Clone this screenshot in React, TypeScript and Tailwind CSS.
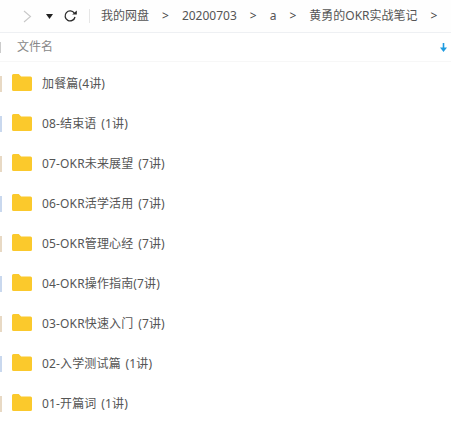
const folders = [
  { name: "加餐篇(4讲)", edge: "bg-[#e8d9c4]" },
  { name: "08-结束语 (1讲)", edge: "bg-[#c9d8ee]" },
  { name: "07-OKR未来展望 (7讲)", edge: "bg-[#e8d9c4]" },
  { name: "06-OKR活学活用 (7讲)", edge: "bg-[#c9d8ee]" },
  { name: "05-OKR管理心经 (7讲)", edge: "bg-[#e8d9c4]" },
  { name: "04-OKR操作指南(7讲)", edge: "bg-[#c9d8ee]" },
  { name: "03-OKR快速入门 (7讲)", edge: "bg-[#e8d9c4]" },
  { name: "02-入学测试篇 (1讲)", edge: "bg-[#c9d8ee]" },
  { name: "01-开篇词 (1讲)", edge: "bg-[#e8d9c4]" },
];

const crumbs = ["我的网盘", "20200703", "a", "黄勇的OKR实战笔记"];

const Folder = () => (
  <svg width="20" height="17" viewBox="0 0 20 17" className="shrink-0">
    <path
      d="M0 1.5A1.5 1.5 0 0 1 1.5 0h5.2l2.4 2.6h9.4A1.5 1.5 0 0 1 20 4.1v11.4a1.5 1.5 0 0 1-1.5 1.5h-17A1.5 1.5 0 0 1 0 15.5z"
      fill="#fbc92c"
    />
  </svg>
);

export default function App() {
  return (
    <div className="w-[451px] h-[433px] overflow-hidden bg-white font-['Noto_Sans','Noto_Sans_CJK_SC',sans-serif] text-[12px] text-[#555]">
      <div className="flex items-center h-[33px] border-b border-[#eef0f3] bg-[#fefefe]">
        <svg width="9" height="13" viewBox="0 0 9 13" className="ml-[23px]">
          <path d="M1 1l6.5 5.5L1 12" fill="none" stroke="#c8c8c8" strokeWidth="1.1" />
        </svg>
        <svg width="7" height="5" viewBox="0 0 7 5" className="ml-[14px]">
          <path d="M0 0h7L3.5 5z" fill="#222" />
        </svg>
        <svg width="14" height="13" viewBox="0 0 14 13" className="ml-[10px]">
          <path
            d="M11.3 3.2A5 5 0 1 0 12 7"
            fill="none"
            stroke="#2a2a2a"
            strokeWidth="1.3"
          />
          <path d="M9.2 4.6h4.6V0.6z" fill="#2a2a2a" />
        </svg>
        <div className="w-px h-[14px] bg-[#e6e6e6] ml-[12px]" />
        <div className="flex items-center ml-[11px]">
          {crumbs.map((c) => (
            <div key={c} className="flex items-center">
              <span>{c}</span>
              <span className="mx-[13px] text-[#444]">&gt;</span>
            </div>
          ))}
        </div>
      </div>
      <div className="flex items-center justify-between h-[29px] pr-[4px] border-b border-[#f7f7f7]">
        <div className="flex items-center">
          <div className="w-px h-[11px] bg-[#ccc]" />
          <span className="ml-[16px] text-[#888]">文件名</span>
        </div>
        <svg width="7" height="9" viewBox="0 0 7 9">
          <path d="M3.5 0v5" stroke="#1e9be0" strokeWidth="1.6" />
          <path d="M0 4.5h7L3.5 9z" fill="#1e9be0" />
        </svg>
      </div>
      <div className="pt-[2px]">
        {folders.map((f) => (
          <div key={f.name} className="flex items-center h-[40px]">
            <div className={`w-[2px] h-[16px] ${f.edge}`} />
            <div className="ml-[10px] mb-[3px] flex">
              <Folder />
            </div>
            <span className="ml-[10px] text-[#555] tracking-[0.15px] [word-spacing:1.5px]">
              {f.name}
            </span>
          </div>
        ))}
      </div>
    </div>
  );
}
